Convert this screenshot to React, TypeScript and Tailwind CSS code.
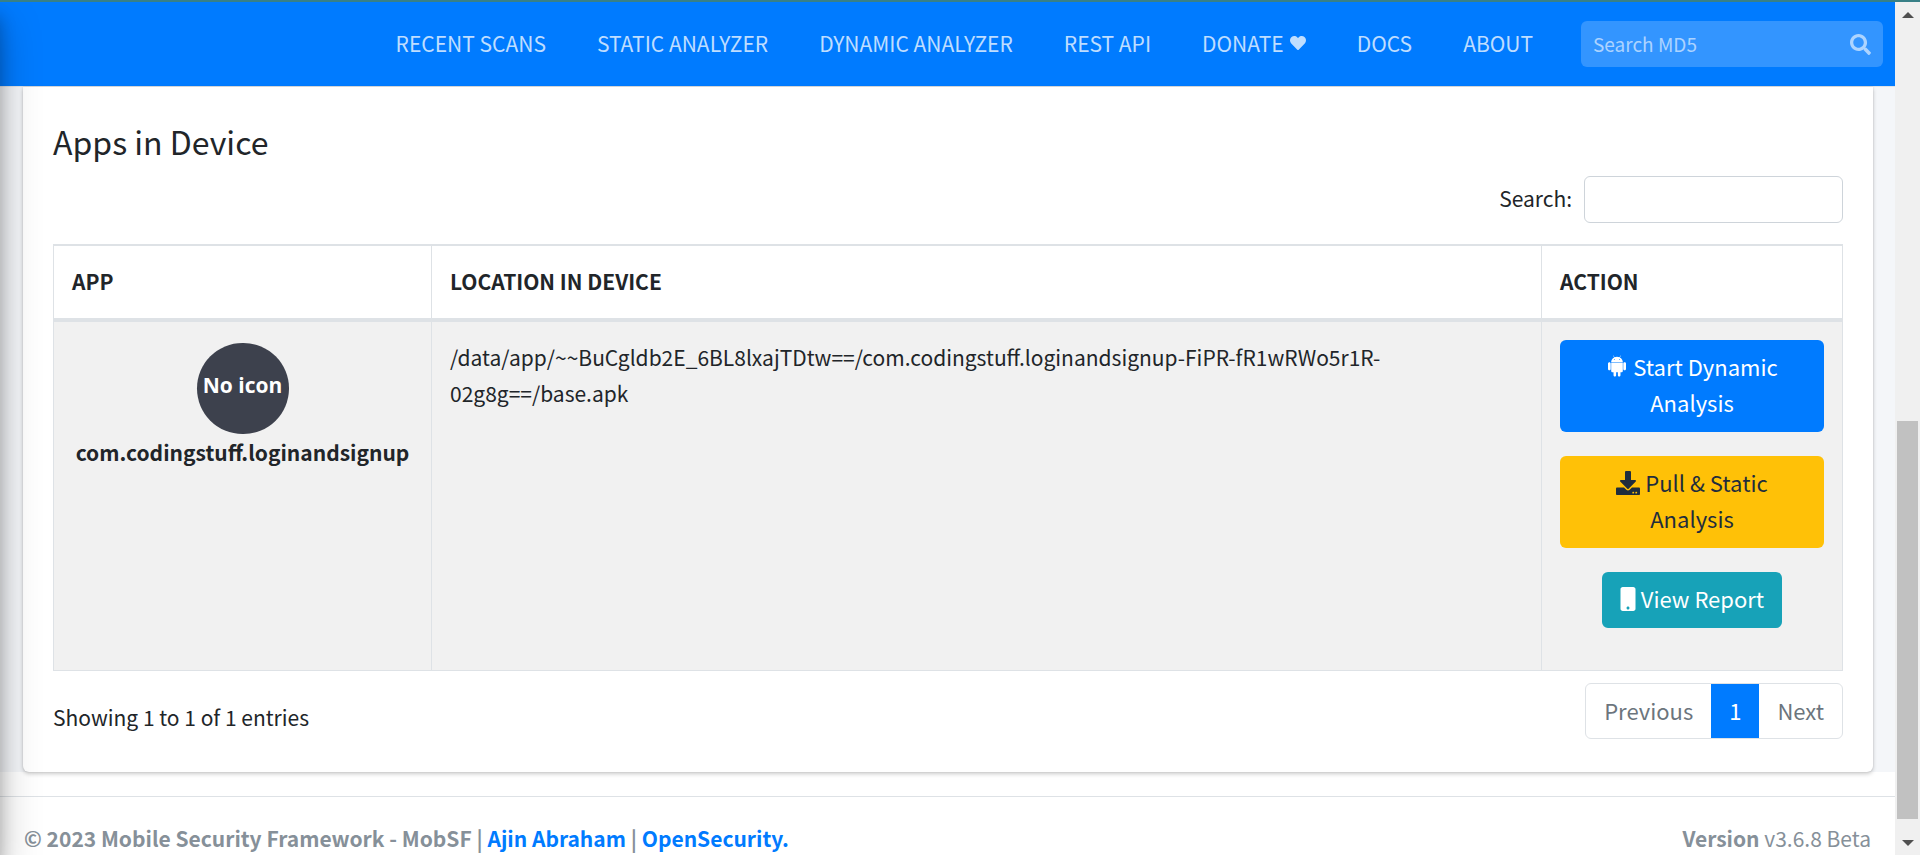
import type { ReactNode } from "react";
import { FaDownload, FaHeart, FaMobile, FaSearch } from "react-icons/fa";

const navLinks: { label: string; heart?: boolean }[] = [
  { label: "RECENT SCANS" },
  { label: "STATIC ANALYZER" },
  { label: "DYNAMIC ANALYZER" },
  { label: "REST API" },
  { label: "DONATE", heart: true },
  { label: "DOCS" },
  { label: "ABOUT" },
];

function AndroidIcon() {
  return (
    <svg viewBox="0 0 448 512" fill="currentColor" className="inline h-6 w-[22px] align-[-2px]" aria-hidden="true">
      <path d="M89.6 204.5v115.8c0 15.4-12.1 27.7-27.5 27.7-15.3 0-30.1-12.4-30.1-27.7V204.5c0-15.1 14.8-27.5 30.1-27.5 15.1 0 27.5 12.4 27.5 27.5zm10.8 157c0 16.4 13.2 29.6 29.6 29.6h19.9l.3 61.1c0 36.9 55.2 36.6 55.2 0v-61.1h37.2v61.1c0 36.7 55.5 36.8 55.5 0v-61.1h20.2c16.2 0 29.4-13.2 29.4-29.6V182.1H100.4v179.4zm248-189.1H99.3c0-42.8 25.6-80 63.6-99.4l-19.1-35.3c-2.8-4.9 4.3-8 6.7-3.8l19.4 35.6c34.9-15.5 75-14.7 108.3 0L297.5 34c2.5-4.3 9.5-1.1 6.7 3.8L285.1 73c37.7 19.4 63.3 56.6 63.3 99.4zm-170.7-55.5c0-5.7-4.6-10.5-10.5-10.5-5.7 0-10.2 4.8-10.2 10.5s4.6 10.5 10.2 10.5c5.9 0 10.5-4.8 10.5-10.5zm113.4 0c0-5.7-4.6-10.5-10.2-10.5-5.9 0-10.5 4.8-10.5 10.5s4.6 10.5 10.5 10.5c5.6 0 10.2-4.8 10.2-10.5zm94.8 60.1c-15.1 0-27.5 12.1-27.5 27.5v115.8c0 15.4 12.4 27.7 27.5 27.7 15.4 0 30.1-12.4 30.1-27.7V204.5c0-15.4-14.8-27.5-30.1-27.5z" />
    </svg>
  );
}

function Navbar() {
  return (
    <header className="flex h-[85px] shrink-0 items-center justify-end border-b border-[#dee2e6] bg-[#007bff] pr-3">
      <nav className="flex gap-[51px] pb-[2px]">
        {navLinks.map((link) => (
          <a key={link.label} href="#" className="flex items-center gap-[6px] whitespace-nowrap text-white/75">
            {link.label}
            {link.heart && <FaHeart className="size-4" aria-hidden="true" />}
          </a>
        ))}
      </nav>
      <form className="ml-12 flex h-[46px] w-[302px] items-center rounded-md bg-white/20 px-3">
        <input
          type="search"
          aria-label="Search MD5"
          placeholder="Search MD5"
          className="min-w-0 flex-1 bg-transparent text-[19px] text-white outline-none placeholder:text-white/60"
        />
        <button type="button" aria-label="Search" className="text-white/60">
          <FaSearch className="size-[21px]" />
        </button>
      </form>
    </header>
  );
}

function ActionButton({ className, children }: { className: string; children: ReactNode }) {
  return <button type="button" className={`rounded-md px-[18px] pt-2 pb-3 text-[22px] ${className}`}>{children}</button>;
}

function AppsTable() {
  const head = "border-x border-[#dee2e6] px-[18px] pt-[17px] pb-[19px]";
  const cell = "border border-[#dee2e6] px-[18px]";
  return (
    <table className="w-full table-fixed border-collapse border-t-2 border-[#dee2e6]">
      <colgroup>
        <col className="w-[378px]" />
        <col />
        <col className="w-[301px]" />
      </colgroup>
      <thead>
        <tr className="border-t-2 border-b-4 border-[#dee2e6] text-left">
          <th className={head}>APP</th>
          <th className={head}>LOCATION IN DEVICE</th>
          <th className={head}>ACTION</th>
        </tr>
      </thead>
      <tbody>
        <tr className="bg-[#f1f1f1] align-top">
          <td className={`${cell} py-[18px] text-center font-bold`}>
            <div className="mx-auto mt-[3px] flex h-[91px] w-[92px] items-center justify-center rounded-full bg-[#3d414d] pb-2 font-['Open_Sans','Noto_Sans',sans-serif] text-[21px] whitespace-nowrap text-white">
              No icon
            </div>
            com.codingstuff.loginandsignup
          </td>
          <td className={`${cell} py-[17px]`}>
            /data/app/~~BuCgldb2E_6BL8lxajTDtw==/com.codingstuff.loginandsignup-FiPR-fR1wRWo5r1R-02g8g==/base.apk
          </td>
          <td className={`${cell} py-[18px]`}>
            <div className="mb-6 flex flex-col items-center gap-6">
              <ActionButton className="w-full bg-[#007bff] text-white">
                <AndroidIcon /> Start Dynamic Analysis
              </ActionButton>
              <ActionButton className="w-full bg-[#ffc107] text-[#1f2d3d]">
                <FaDownload className="inline size-6 align-[-3px]" aria-hidden="true" /> Pull &amp; Static Analysis
              </ActionButton>
              <ActionButton className="bg-[#17a2b8] text-white">
                <FaMobile className="inline h-6 w-4 align-[-3px]" aria-hidden="true" /> View Report
              </ActionButton>
            </div>
          </td>
        </tr>
      </tbody>
    </table>
  );
}

function Footer() {
  return (
    <footer className="flex justify-between border-t border-[#dee2e6] px-6 pt-[23px] pb-6 text-[#869099]">
      <strong>
        © 2023 Mobile Security Framework - MobSF | <a href="#" className="text-[#007bff]">Ajin Abraham</a> |{" "}
        <a href="#" className="text-[#007bff]">OpenSecurity.</a>
      </strong>
      <span><b>Version</b> v3.6.8 Beta</span>
    </footer>
  );
}

function ScrollRail() {
  return (
    <div className="flex w-[25px] shrink-0 flex-col items-center bg-[#f0f0f0]" aria-hidden="true">
      <svg viewBox="0 0 12 6" className="mt-[10px] h-[6px] w-3"><path d="M6 0l6 6H0z" fill="#505050" /></svg>
      <div className="flex-[403]" />
      <div className="w-[21px] flex-[398] bg-[#c1c1c1]" />
      <svg viewBox="0 0 12 6" className="mt-[21px] mb-[9px] h-[6px] w-3"><path d="M6 6L0 0h12z" fill="#505050" /></svg>
    </div>
  );
}

export default function App() {
  return (
    <div className="flex h-screen flex-col bg-white font-['Noto_Sans_CJK_SC',sans-serif] text-[21px] leading-[36px] text-[#212529]">
      <div className="h-[2px] shrink-0 bg-[#388087]" />
      <div className="flex min-h-0 flex-1">
        <div className="relative min-w-0 flex-1 overflow-hidden">
          <Navbar />
          <div className="bg-[#f4f6f9] pr-[22px] pl-[23px]">
            <main className="rounded-b-md bg-white px-[30px] pt-[33px] pb-[33px] shadow-[0_0_2px_rgba(0,0,0,0.13),0_2px_4px_rgba(0,0,0,0.2)]">
              <h1 className="text-[32px] leading-[43px]">Apps in Device</h1>
              <div className="mt-[13px] mb-[21px] flex items-center justify-end gap-3">
                <label htmlFor="table-search" className="pb-1">Search:</label>
                <input id="table-search" type="search" className="h-[47px] w-[259px] rounded-md border border-[#ced4da] bg-white px-3 outline-none" />
              </div>
              <AppsTable />
              <div className="mt-3 flex items-start justify-between">
                <p className="pt-4">Showing 1 to 1 of 1 entries</p>
                <nav aria-label="Table pages" className="flex h-14 overflow-hidden rounded-md border border-[#dee2e6] text-[22px] text-[#6c757d]">
                  <button type="button" className="px-[18px] pb-[2px]">Previous</button>
                  <button type="button" className="-my-px bg-[#007bff] px-[18px] pb-[2px] text-white">1</button>
                  <button type="button" className="px-[18px] pb-[2px]">Next</button>
                </nav>
              </div>
            </main>
          </div>
          <div className="pt-6">
            <Footer />
          </div>
          <div className="pointer-events-none absolute top-0 -left-20 h-full w-20 shadow-[0_21px_42px_rgba(0,0,0,0.25),0_15px_15px_rgba(0,0,0,0.22)]" />
        </div>
        <ScrollRail />
      </div>
    </div>
  );
}
